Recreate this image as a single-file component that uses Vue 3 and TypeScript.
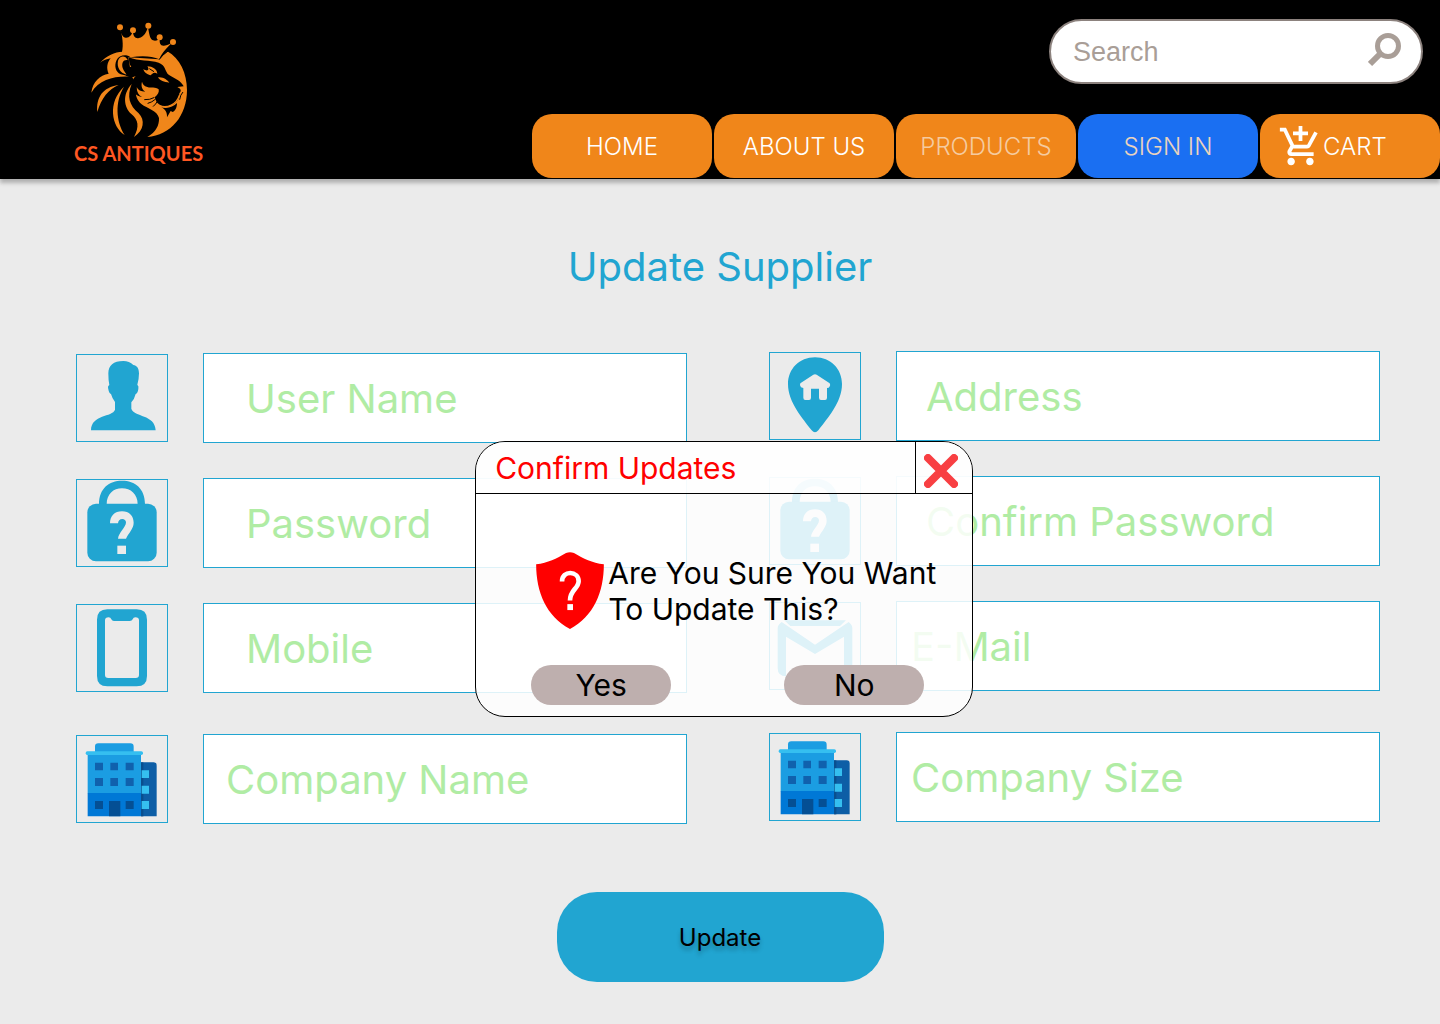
<script setup lang="ts">
import { ref } from 'vue'

interface Field {
  id: string
  label: string
  icon: 'user' | 'lock' | 'phone' | 'building' | 'pin' | 'mail'
  type: string
  indent: 'wide' | 'medium' | 'narrow' | 'slim'
}

const columns: Field[][] = [
  [
    { id: 'user-name', label: 'User Name', icon: 'user', type: 'text', indent: 'wide' },
    { id: 'password', label: 'Password', icon: 'lock', type: 'password', indent: 'wide' },
    { id: 'mobile', label: 'Mobile', icon: 'phone', type: 'tel', indent: 'wide' },
    { id: 'company-name', label: 'Company Name', icon: 'building', type: 'text', indent: 'narrow' },
  ],
  [
    { id: 'address', label: 'Address', icon: 'pin', type: 'text', indent: 'medium' },
    { id: 'confirm-password', label: 'Confirm Password', icon: 'lock', type: 'password', indent: 'medium' },
    { id: 'email', label: 'E-Mail', icon: 'mail', type: 'email', indent: 'slim' },
    { id: 'company-size', label: 'Company Size', icon: 'building', type: 'text', indent: 'slim' },
  ],
]

const confirming = ref(true)
</script>

<template>
  <div class="page">
    <header class="header">
      <a class="brand" href="#">
        <svg class="lion" viewBox="90 36 294 348" aria-hidden="true">
          <g fill="#f0861a">
            <circle cx="180" cy="52" r="9" />
            <circle cx="219" cy="61" r="9" />
            <circle cx="265" cy="47" r="9" />
            <circle cx="299" cy="82" r="9" />
            <circle cx="339" cy="96" r="9" />
            <path d="M181 56 C184 72 188 82 197 83 C208 84 215 76 218 64 C220 80 227 87 237 84 C252 80 260 66 264 50 C267 70 270 88 279 91 C288 94 295 90 299 84 C298 100 301 108 312 107 C322 106 330 102 338 97 C322 112 307 126 298 148 C276 138 246 136 212 142 L186 126 C191 104 187 78 181 56Z" />
            <path d="M322 124 C360 146 381 190 381 240 C381 318 332 376 262 381 C288 366 298 346 297 324 C292 302 262 296 244 282 C228 268 224 250 230 228 L214 196 L205 142 L298 148Z" />
            <path d="M120 158 C140 136 164 126 188 125 L214 140 C196 132 176 136 170 150 C162 166 166 186 182 193 L214 200 C170 196 118 206 94 248 C98 214 120 196 146 191 C138 174 142 156 152 145 C140 147 130 151 120 158Z" />
            <path d="M174 152 C180 136 196 136 203 150 C190 148 184 158 188 174 C192 184 196 188 200 194 C180 188 170 172 174 152Z" />
            <path d="M112 306 C108 262 128 232 176 225 C146 238 124 264 112 306Z" />
            <path d="M194 375 C154 350 142 276 192 230 C164 276 168 334 194 375Z" />
            <path d="M215 222 C186 254 192 292 214 312 C236 330 238 350 222 381 C252 362 256 330 236 310 C208 286 200 260 215 222Z" />
          </g>
          <path fill="#000" d="M206 142 C236 154 270 150 296 158 C318 166 314 184 326 194 C342 204 364 212 371 229 L352 231 C362 236 366 242 358 250 L357 262 C352 278 338 288 316 290 C306 290 300 286 290 277 L284 262 C294 254 298 246 296 238 C286 230 274 236 262 231 C252 228 248 222 246 215 C242 230 248 240 256 245 C242 245 234 240 230 231 C230 246 236 256 246 261 C228 260 218 244 216 226 C216 210 222 202 228 198 C214 204 204 202 196 196 L212 190 C202 184 198 178 196 168 C202 172 208 172 214 170 C206 162 208 150 206 142Z" />
          <path fill="#000" d="M304 292 C322 297 340 291 351 279 C351 292 346 303 338 306 L332 303 L321 322 C322 308 316 298 304 292Z" />
          <g fill="none" stroke="#000" stroke-width="3" stroke-linecap="round">
            <path d="M254 269 Q270 270 282 263" />
            <path d="M264 280 Q276 277 286 268" />
            <path d="M280 289 Q288 282 291 276" />
            <path d="M359 268 Q361 254 368 247" />
            <path d="M298 148 Q306 134 323 124" />
          </g>
          <g fill="none" stroke="#f0861a" stroke-width="4" stroke-linecap="round">
            <path d="M296 286 C322 298 350 282 358 256" />
          </g>
          <g fill="#f0861a">
            <path d="M250 177 C262 186 270 180 262 169 C278 170 290 176 292 191 C282 184 276 192 272 196 C264 194 252 188 250 177Z" />
            <path d="M294 202 C310 200 322 210 328 218 C312 216 300 212 294 202Z" />
          </g>
          <path d="M268 176 L282 185" stroke="#000" stroke-width="3" />
        </svg>
        <span class="brand-name">CS ANTIQUES</span>
      </a>

      <div class="header-side">
        <form class="search" role="search" @submit.prevent>
          <input type="search" placeholder="Search" aria-label="Search" />
          <button type="submit" aria-label="Search">
            <svg viewBox="0 0 34 34" width="34" height="34" fill="none" stroke="#a99e97" stroke-width="5" aria-hidden="true">
              <circle cx="20" cy="13" r="10.5" />
              <path d="M13 20 L2 31" stroke-width="6" />
            </svg>
          </button>
        </form>
        <nav class="nav">
          <a href="#">HOME</a>
          <a href="#">ABOUT US</a>
          <a href="#" class="muted">PRODUCTS</a>
          <a href="#" class="sign-in">SIGN IN</a>
          <a href="#" class="cart">
            <svg viewBox="0 0 24 24" width="45" height="45" fill="#fff" aria-hidden="true">
              <path d="M11 9h2V6h3V4h-3V1h-2v3H8v2h3v3zm-4 9c-1.1 0-1.99.9-1.99 2S5.9 22 7 22s2-.9 2-2-.9-2-2-2zm10 0c-1.1 0-1.99.9-1.99 2s.89 2 1.99 2 2-.9 2-2-.9-2-2-2zm-9.83-3.25l.03-.12.9-1.63h7.45c.75 0 1.41-.41 1.75-1.03l3.86-7.01L19.42 4h-.01l-1.1 2-2.76 5H8.53l-.13-.27L6.16 6l-.95-2-.94-2H1v2h2l3.6 7.59-1.35 2.45c-.16.28-.25.61-.25.96 0 1.1.9 2 2 2h12v-2H7.42c-.13 0-.25-.11-.25-.25z" />
            </svg>
            CART
          </a>
        </nav>
      </div>
    </header>

    <main>
      <h1>Update Supplier</h1>

      <form class="supplier" @submit.prevent="confirming = true">
        <div class="fields">
          <div v-for="(column, index) in columns" :key="index" class="column">
            <div v-for="field in column" :key="field.id" class="field" :class="field.icon">
              <label :for="field.id" :aria-label="field.label">
                <svg v-if="field.icon === 'user'" viewBox="51 45 270 258" fill="#21a5d1" aria-hidden="true">
                  <path d="M190 63 C160 63 145 76 145 100 Q145 122 148 135 Q142 138 145 148 Q147 160 153 162 Q157 176 165 186 V209 C157 232 94 222 93 271 H287 C285 222 222 232 214 206 V187 Q223 178 227 162 Q233 160 235 147 Q237 138 232 134 Q237 116 237 100 C237 84 230 76 220 75 Q208 63 190 63Z" />
                </svg>
                <svg v-else-if="field.icon === 'lock'" viewBox="51 420 270 258" fill="#21a5d1" aria-hidden="true">
                  <path d="M117 493 C117 445 147 422 186 422 S255 445 255 493 H233 C233 462 212 445 186 445 S140 462 140 493Z" />
                  <rect x="82" y="491" width="208" height="173" rx="26" />
                  <path fill="#ebebeb" d="M150 550 C150 528 164 514 186 514 C208 514 221 528 221 548 C221 566 205 580 198 596 H174 C176 578 198 562 198 547 C198 541 193 537 187 537 C179 537 175 542 174 550Z" />
                  <rect fill="#ebebeb" x="172" y="617" width="26" height="25" />
                </svg>
                <svg v-else-if="field.icon === 'phone'" viewBox="51 54 270 258" fill="#21a5d1" aria-hidden="true">
                  <path fill-rule="evenodd" d="M142 67 H230 Q261 67 261 98 V267 Q261 298 230 298 H142 Q111 298 111 267 V98 Q111 67 142 67Z M146 91 Q135 91 135 100 V264 Q135 273 145 273 H227 Q237 273 237 264 V100 Q237 91 226 91 Q220 91 218 97 Q216 102 209 102 H162 Q156 102 154 97 Q152 91 146 91Z" />
                </svg>
                <svg v-else-if="field.icon === 'building'" viewBox="51 438 270 258" aria-hidden="true">
                  <path fill="#1b9de2" d="M105 486 V470 Q105 460 115 460 H211 Q221 460 221 470 V486Z" />
                  <path fill="#0d5ea6" d="M243 517 H281 Q290 517 290 527 V679 H243Z" />
                  <path fill="#0a4f8e" d="M243 517 H250 V679 H243Z" />
                  <path fill="#1b9de2" d="M83 493 H243 V610 H83Z" />
                  <path fill="#0078d6" d="M83 609 H243 V679 H83Z" />
                  <rect fill="#35bff0" x="77" y="484" width="172" height="11" rx="5" />
                  <path fill="#1061ad" d="M105 518h24v23h-24z M151 518h23v23h-23z M197 518h24v23h-24z M105 564h24v24h-24z M151 564h23v24h-23z M197 564h24v24h-24z" />
                  <path fill="#044f94" d="M105 633h24v24h-24z M197 633h24v24h-24z M147 633h34v46h-34z" />
                  <path fill="#35bff0" d="M245 541h22v23h-22z M245 587h22v24h-22z M245 633h22v24h-22z" />
                </svg>
                <svg v-else-if="field.icon === 'pin'" viewBox="60 42 270 258" fill="#21a5d1" aria-hidden="true">
                  <path d="M195 55 C148 55 114 90 114 135 C114 190 158 238 185 274 Q195 286 205 274 C232 238 276 190 276 135 C276 90 242 55 195 55Z" />
                  <path fill="#ebebeb" d="M190 107 Q195 104 200 107 L239 133 Q243 140 236 146 L231 147 V176 Q231 183 225 183 H213 Q207 183 207 176 V149 H183 V176 Q183 183 177 183 H166 Q160 183 160 176 V147 L153 145 Q147 140 151 133Z" />
                </svg>
                <svg v-else viewBox="60 45 270 258" fill="#21a5d1" aria-hidden="true">
                  <path d="M103 97 H288 L270 114 H121Z" />
                  <path d="M95 102 L195 170 L296 102 Q307 110 307 121 V240 Q307 265 282 265 V146 L195 198 L108 146 V265 Q83 265 83 240 V121 Q83 110 95 102Z" />
                </svg>
              </label>
              <input :id="field.id" :type="field.type" :placeholder="field.label" :class="field.indent" />
            </div>
          </div>

          <div v-if="confirming" class="dialog" role="dialog" aria-labelledby="dialog-title">
            <div class="dialog-head">
              <h2 id="dialog-title">Confirm Updates</h2>
              <button type="button" class="close" aria-label="Close" @click="confirming = false">
                <svg viewBox="0 0 34 34" width="34" height="34" stroke="#f83f42" stroke-width="8" stroke-linecap="round" aria-hidden="true">
                  <path d="M4 4 L30 30 M30 4 L4 30" />
                </svg>
              </button>
            </div>
            <div class="dialog-body">
              <svg viewBox="47 38 204 232" width="68" height="77" aria-hidden="true">
                <path fill="#f00" d="M137 41 Q149 36 161 41 C190 58 215 71 251 75 C251 160 220 232 149 270 C78 232 47 160 47 75 C83 71 108 58 137 41Z" />
                <path fill="none" stroke="#fff" stroke-width="14" d="M125 127 C125 92 175 94 175 126 C175 148 149 152 149 184" />
                <path fill="#fff" d="M141 195h17v18h-17z" />
              </svg>
              <p>Are You Sure You Want To Update This?</p>
            </div>
            <div class="dialog-actions">
              <button type="button" @click="confirming = false">Yes</button>
              <button type="button" @click="confirming = false">No</button>
            </div>
          </div>
        </div>

        <button class="update" type="submit">Update</button>
      </form>
    </main>
  </div>
</template>

<style>
body {
  background: #ebebeb;
}
</style>

<style scoped>
.page {
  min-height: 100vh;
  font-family: Inter, "Liberation Sans", sans-serif;
  color: #000;
}

.page *,
.page *::before {
  box-sizing: border-box;
}

button {
  font: inherit;
  color: inherit;
  border: 0;
  padding: 0;
  cursor: pointer;
}

svg {
  display: block;
  flex: none;
}

.header {
  display: flex;
  justify-content: space-between;
  background: #000;
  box-shadow: 0 4px 4px rgba(0, 0, 0, 0.25);
}

.brand {
  display: flex;
  flex-direction: column;
  align-items: center;
  margin-left: 74px;
  padding-top: 22px;
  text-decoration: none;
}

.lion {
  width: 98px;
  height: 116px;
}

.brand-name {
  font: 700 20px/24px Lato, sans-serif;
  margin-top: 3px;
  color: #ff5722;
  white-space: nowrap;
}

.header-side {
  display: flex;
  flex-direction: column;
  align-items: flex-end;
  gap: 30px;
  padding: 19px 0 1px;
}

.search {
  display: flex;
  align-items: center;
  width: 374px;
  height: 65px;
  margin-right: 17px;
  padding: 0 19px 0 22px;
  background: #fff;
  border: 2px solid #8c827e;
  border-radius: 33px;
}

.search input {
  flex: 1;
  min-width: 0;
  padding: 0;
  border: 0;
  outline: 0;
  background: none;
  appearance: none;
  font: 27px/32px "Liberation Sans", sans-serif;
}

.search input::placeholder {
  color: #a99e97;
}

.search button {
  padding-bottom: 4px;
  background: none;
}

.nav {
  display: flex;
  gap: 2px;
}

.nav a {
  display: flex;
  align-items: center;
  justify-content: center;
  width: 180px;
  height: 64px;
  border-radius: 20px;
  background: #f0861a;
  color: #fff;
  font-size: 24px;
  font-weight: 300;
  text-decoration: none;
}

.nav .muted {
  color: #f5cba0;
}

.nav .sign-in {
  background: #1a6ff2;
  color: #ebd3bd;
}

.nav .cart {
  justify-content: flex-start;
  padding-left: 18px;
}

h1 {
  margin: 64px 0 60px;
  font-size: 40px;
  line-height: 48px;
  font-weight: 400;
  text-align: center;
  color: #21a5d1;
}

.fields {
  position: relative;
  display: flex;
  align-items: flex-start;
  gap: 82px;
  padding: 0 60px 0 76px;
}

.column {
  flex: 1;
  min-width: 0;
  display: flex;
  flex-direction: column;
  gap: 35px;
}

.column:first-child {
  padding-top: 2px;
}

.field {
  display: flex;
  align-items: center;
  gap: 35px;
}

.field.building {
  margin-top: 6px;
}

.field label {
  flex: none;
  width: 92px;
  height: 88px;
  border: 1px solid #21a5d1;
}

.field label svg {
  width: 90px;
  height: 86px;
}

.field input {
  flex: 1;
  min-width: 0;
  height: 90px;
  border: 1px solid #21a5d1;
  border-radius: 0;
  outline: 0;
  background: #fff;
  font: 400 40px/48px Inter, sans-serif;
}

.field input::placeholder {
  color: #b0eca4;
  opacity: 1;
}

.field .wide {
  padding: 0 42px;
}

.field .medium {
  padding: 0 29px;
}

.field .narrow {
  padding: 0 22px;
}

.field .slim {
  padding: 0 14px;
}

.dialog {
  position: absolute;
  top: 90px;
  left: 33%;
  width: 498px;
  border: 1px solid #000;
  border-radius: 30px;
  background: rgba(255, 255, 255, 0.85);
  overflow: hidden;
}

.dialog-head {
  display: flex;
  height: 52px;
  border-bottom: 1px solid #000;
  background: rgba(255, 255, 255, 0.7);
}

.dialog h2 {
  flex: 1;
  margin: 0;
  padding: 8px 0 0 19px;
  font-size: 30px;
  line-height: 36px;
  font-weight: 400;
  color: #f00;
}

.close {
  display: flex;
  align-items: center;
  justify-content: center;
  width: 57px;
  padding: 6px 6px 0 0;
  border-left: 1px solid #000;
  background: none;
}

.dialog-body {
  display: flex;
  align-items: center;
  gap: 4px;
  padding: 58px 20px 0 60px;
}

.dialog-body p {
  margin: 0;
  font-size: 30px;
  line-height: 36px;
}

.dialog-actions {
  display: flex;
  justify-content: space-between;
  padding: 36px 48px 11px 55px;
}

.dialog-actions button {
  width: 140px;
  height: 40px;
  border-radius: 20px;
  background: #beafae;
  font-size: 30px;
  line-height: 36px;
}

.update {
  display: block;
  width: 327px;
  height: 90px;
  margin: 68px auto 42px;
  border-radius: 40px;
  background: #21a5d1;
  font-size: 24px;
  text-shadow: 0 4px 4px rgba(0, 0, 0, 0.25);
}
</style>
